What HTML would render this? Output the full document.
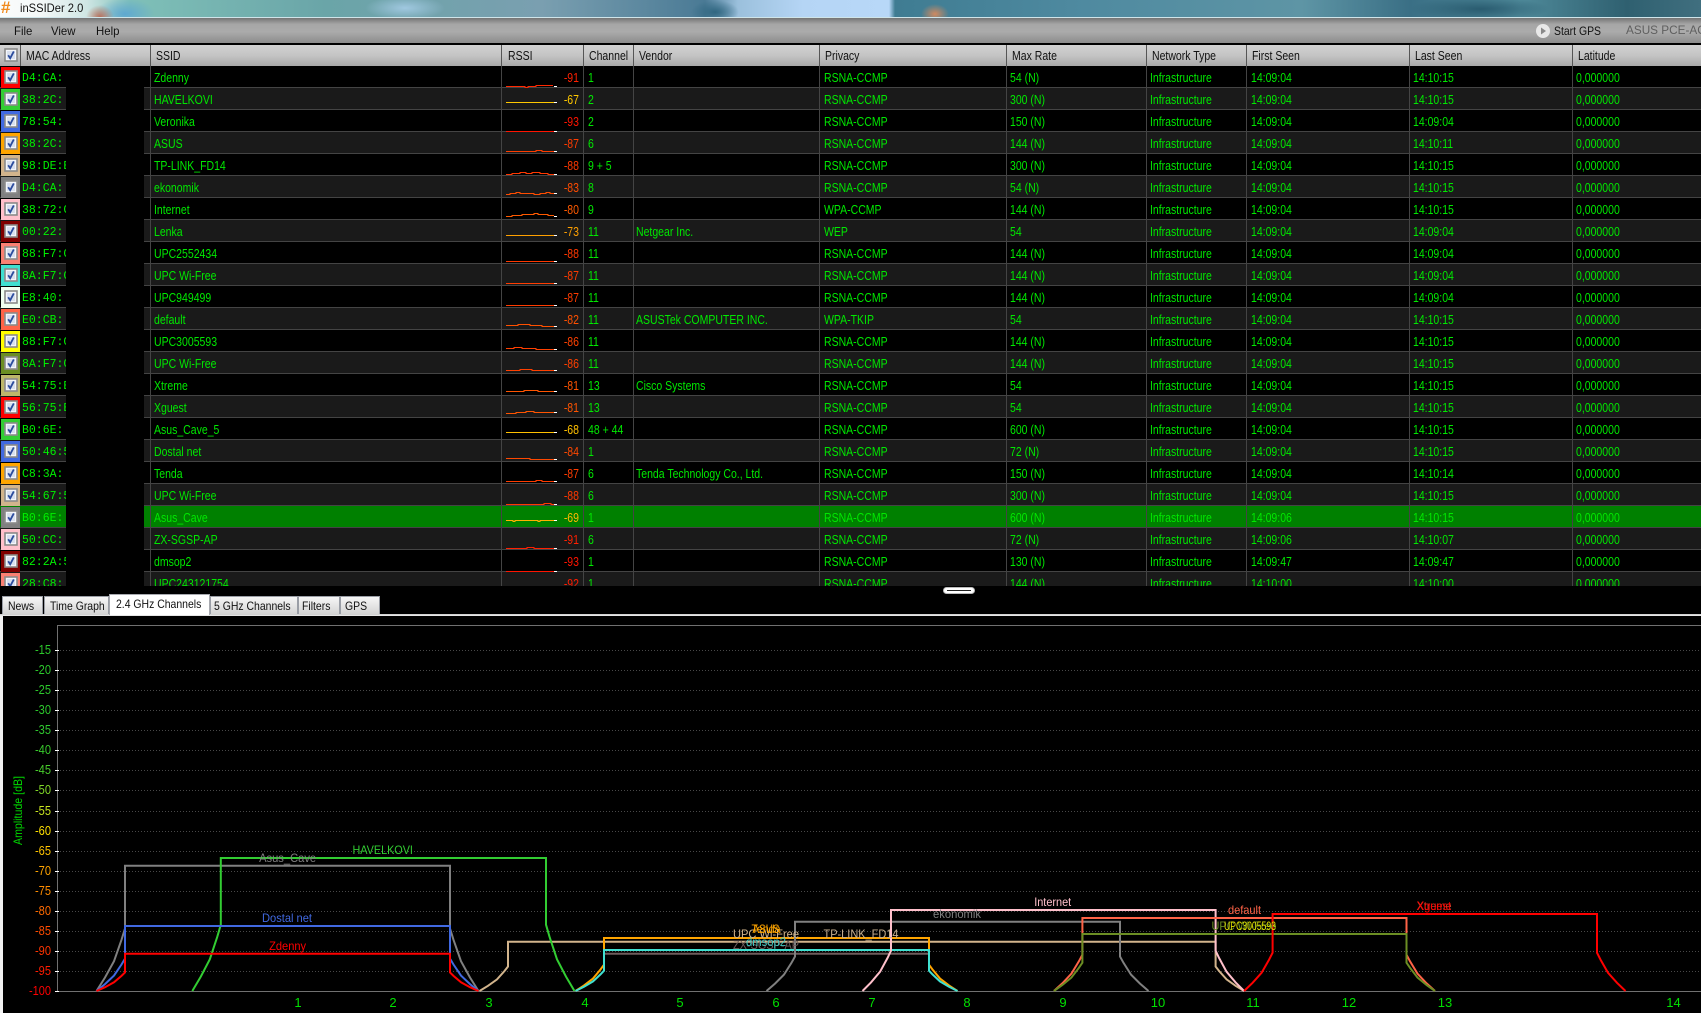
<!DOCTYPE html>
<html><head><meta charset="utf-8"><title>inSSIDer 2.0</title>
<style>
html,body{margin:0;padding:0;background:#000;width:1701px;height:1013px;overflow:hidden}
body{position:relative;font:12px/22px "Liberation Sans",sans-serif;color:#00e800}
.abs{position:absolute}
#title{left:0;top:0;width:1701px;height:18px;background:radial-gradient(ellipse 14px 12px at 100px 17px,#b8705c,transparent),radial-gradient(ellipse 30px 16px at 125px 14px,#5fa8d0,transparent),radial-gradient(ellipse 40px 12px at 405px 8px,#a0c8e0,transparent),radial-gradient(ellipse 24px 12px at 715px 12px,#2f6680,transparent),radial-gradient(ellipse 14px 10px at 935px 14px,#d08a60,transparent),radial-gradient(ellipse 70px 12px at 1480px 9px,#2a5c70,transparent),linear-gradient(90deg,#fafcfc 0,#f4f8f8 40px,#cfe6e4 87px,#7fc0b8 130px,#6aa5a8 325px,#7a9fb0 542px,#4a7a95 705px,#9bc0dc 738px,#b5d5f5 803px,#b8d8f8 889px,#3f7c92 895px,#4f8aa0 1085px,#5e95a5 1302px,#3a6f85 1410px,#4f8a9a 1519px,#2f6070 1627px,#406f7f 1701px)}
#tl{left:0;top:17px;width:1701px;height:1px;background:#cfe5ea}
#menu{left:0;top:18px;width:1701px;height:25px;background:linear-gradient(#747474,#a6a6a6 25%,#ababab 55%,#8c8c8c)}
.t{position:absolute;white-space:nowrap;transform:scaleX(.87);transform-origin:0 50%}
.k{color:#111}
#hdr{left:0;top:45px;width:1701px;height:21px;background:linear-gradient(#d2d2d2,#c4c4c4 50%,#a8a8a8);color:#111}
#hdr .t{top:1px;line-height:21px;font-size:12.5px;transform:scaleX(.84)}
#hdr u{position:absolute;top:0;width:1px;height:21px;background:#555}
#list{left:0;top:66px;width:1701px;height:520px;overflow:hidden}
.r{position:absolute;left:0;width:1701px;height:21px;border-bottom:1px solid #444;background:#000}
.e{background:#1a1a1a}
.s{background:#008000}
.r s{position:absolute;left:1px;top:1px;width:19px;height:21px}
.r i{position:absolute;top:1px;font-style:normal;font-size:12.5px;white-space:nowrap;transform:scaleX(.84);transform-origin:0 50%}
.r i:nth-of-type(1){left:22px;top:2px;width:44px;overflow:hidden;transform:none;font:11.5px/22px "Liberation Mono",monospace;color:#00f000}
.r i:nth-of-type(2){left:153.5px}
.r i:nth-of-type(3){left:539px;width:40px;text-align:right;transform-origin:100% 50%}
.r i:nth-of-type(4){left:588px}
.r i:nth-of-type(5){left:636px}
.r i:nth-of-type(6){left:823.5px}
.r i:nth-of-type(7){left:1010px}
.r i:nth-of-type(8){left:1150px}
.r i:nth-of-type(9){left:1250.5px}
.r i:nth-of-type(10){left:1413px}
.r i:nth-of-type(11){left:1575.5px}
#red{left:66px;top:0;width:77.5px;height:520px;background:#000}
.v{position:absolute;top:0;width:1px;height:520px;background:#444}
.tab{position:absolute;top:596px;height:17px;border:1px solid #9a9ea6;border-bottom:0;background:linear-gradient(#f6f6f6,#d4d4d4);box-sizing:content-box}
.tab.a{top:594px;height:20px;background:#fff;border:1px solid #a8aab0;border-bottom:0}
</style></head><body>
<div class="abs" id="title"></div><div class="abs" id="tl"></div>
<div class="abs" style="left:1px;top:-2px;font:bold 17px/20px 'Liberation Sans',sans-serif;color:#f08a1e">#</div>
<div class="t k" style="left:20px;top:-3px;transform:scaleX(.93)">inSSIDer 2.0</div>
<div class="abs" id="menu"></div>
<div class="t k" style="left:14px;top:20px;transform:scaleX(.95)">File</div>
<div class="t k" style="left:51px;top:20px;transform:scaleX(.95)">View</div>
<div class="t k" style="left:95.5px;top:20px;transform:scaleX(.95)">Help</div>
<svg class="abs" style="left:1535px;top:23px" width="16" height="16"><circle cx="8" cy="8" r="7" fill="#e8e8e8"/><path d="M6 4.5L11 8L6 11.5Z" fill="#8a8a8a"/></svg>
<div class="t k" style="left:1553.5px;top:20px">Start GPS</div>
<div class="t" style="left:1625.5px;top:19px;color:#5f5f5f;transform:scaleX(.98)">ASUS PCE-AC68</div>

<div class="abs" id="hdr">
<s style="position:absolute;left:0;top:0;width:20px;height:21px"></s>
<span class="t" style="left:26px">MAC Address</span><span class="t" style="left:156px">SSID</span><span class="t" style="left:507.5px">RSSI</span><span class="t" style="left:588.5px">Channel</span><span class="t" style="left:639px">Vendor</span><span class="t" style="left:824.5px">Privacy</span><span class="t" style="left:1012px">Max Rate</span><span class="t" style="left:1152px">Network Type</span><span class="t" style="left:1252px">First Seen</span><span class="t" style="left:1414.5px">Last Seen</span><span class="t" style="left:1577.5px">Latitude</span>
<u style="left:20px"></u><u style="left:150px"></u><u style="left:501px"></u><u style="left:583px"></u><u style="left:633px"></u><u style="left:819px"></u><u style="left:1006px"></u><u style="left:1146px"></u><u style="left:1246px"></u><u style="left:1409px"></u><u style="left:1572px"></u>
</div>
<svg class="abs" style="left:4px;top:48px" width="14" height="14"><use href="#cb"/></svg>

<div class="abs" id="list">
<div class="r" style="top:0"><s style="background:#f00"></s><i>D4:CA:</i><i>Zdenny</i><i style="color:#ff2000">-91</i><i>1</i><i></i><i>RSNA-CCMP</i><i>54 (N)</i><i>Infrastructure</i><i>14:09:04</i><i>14:10:15</i><i>0,000000</i></div>
<div class="r e" style="top:22px"><s style="background:#32cd32"></s><i>38:2C:</i><i>HAVELKOVI</i><i style="color:#ffc800">-67</i><i>2</i><i></i><i>RSNA-CCMP</i><i>300 (N)</i><i>Infrastructure</i><i>14:09:04</i><i>14:10:15</i><i>0,000000</i></div>
<div class="r" style="top:44px"><s style="background:#4169e1"></s><i>78:54:</i><i>Veronika</i><i style="color:#ff1400">-93</i><i>2</i><i></i><i>RSNA-CCMP</i><i>150 (N)</i><i>Infrastructure</i><i>14:09:04</i><i>14:09:04</i><i>0,000000</i></div>
<div class="r e" style="top:66px"><s style="background:#ffa500"></s><i>38:2C:</i><i>ASUS</i><i style="color:#ff3c00">-87</i><i>6</i><i></i><i>RSNA-CCMP</i><i>144 (N)</i><i>Infrastructure</i><i>14:09:04</i><i>14:10:11</i><i>0,000000</i></div>
<div class="r" style="top:88px"><s style="background:#d2b48c"></s><i>98:DE:E0</i><i>TP-LINK_FD14</i><i style="color:#ff3800">-88</i><i>9 + 5</i><i></i><i>RSNA-CCMP</i><i>300 (N)</i><i>Infrastructure</i><i>14:09:04</i><i>14:10:15</i><i>0,000000</i></div>
<div class="r e" style="top:110px"><s style="background:#808080"></s><i>D4:CA:</i><i>ekonomik</i><i style="color:#ff4c00">-83</i><i>8</i><i></i><i>RSNA-CCMP</i><i>54 (N)</i><i>Infrastructure</i><i>14:09:04</i><i>14:10:15</i><i>0,000000</i></div>
<div class="r" style="top:132px"><s style="background:#ffc0cb"></s><i>38:72:C0</i><i>Internet</i><i style="color:#ff5a00">-80</i><i>9</i><i></i><i>WPA-CCMP</i><i>144 (N)</i><i>Infrastructure</i><i>14:09:04</i><i>14:10:15</i><i>0,000000</i></div>
<div class="r e" style="top:154px"><s style="background:#800000"></s><i>00:22:</i><i>Lenka</i><i style="color:#ffa000">-73</i><i>11</i><i>Netgear Inc.</i><i>WEP</i><i>54</i><i>Infrastructure</i><i>14:09:04</i><i>14:09:04</i><i>0,000000</i></div>
<div class="r" style="top:176px"><s style="background:#fa8072"></s><i>88:F7:C0</i><i>UPC2552434</i><i style="color:#ff3800">-88</i><i>11</i><i></i><i>RSNA-CCMP</i><i>144 (N)</i><i>Infrastructure</i><i>14:09:04</i><i>14:09:04</i><i>0,000000</i></div>
<div class="r e" style="top:198px"><s style="background:#40e0d0"></s><i>8A:F7:C0</i><i>UPC Wi-Free</i><i style="color:#ff3c00">-87</i><i>11</i><i></i><i>RSNA-CCMP</i><i>144 (N)</i><i>Infrastructure</i><i>14:09:04</i><i>14:09:04</i><i>0,000000</i></div>
<div class="r" style="top:220px"><s style="background:#f0fff0"></s><i>E8:40:</i><i>UPC949499</i><i style="color:#ff3c00">-87</i><i>11</i><i></i><i>RSNA-CCMP</i><i>144 (N)</i><i>Infrastructure</i><i>14:09:04</i><i>14:09:04</i><i>0,000000</i></div>
<div class="r e" style="top:242px"><s style="background:#ff6347"></s><i>E0:CB:</i><i>default</i><i style="color:#ff5000">-82</i><i>11</i><i>ASUSTek COMPUTER INC.</i><i>WPA-TKIP</i><i>54</i><i>Infrastructure</i><i>14:09:04</i><i>14:10:15</i><i>0,000000</i></div>
<div class="r" style="top:264px"><s style="background:#ff0"></s><i>88:F7:C0</i><i>UPC3005593</i><i style="color:#ff4000">-86</i><i>11</i><i></i><i>RSNA-CCMP</i><i>144 (N)</i><i>Infrastructure</i><i>14:09:04</i><i>14:10:15</i><i>0,000000</i></div>
<div class="r e" style="top:286px"><s style="background:#6b8e23"></s><i>8A:F7:C0</i><i>UPC Wi-Free</i><i style="color:#ff4000">-86</i><i>11</i><i></i><i>RSNA-CCMP</i><i>144 (N)</i><i>Infrastructure</i><i>14:09:04</i><i>14:10:15</i><i>0,000000</i></div>
<div class="r" style="top:308px"><s style="background:#bdb76b"></s><i>54:75:E0</i><i>Xtreme</i><i style="color:#ff5400">-81</i><i>13</i><i>Cisco Systems</i><i>RSNA-CCMP</i><i>54</i><i>Infrastructure</i><i>14:09:04</i><i>14:10:15</i><i>0,000000</i></div>
<div class="r e" style="top:330px"><s style="background:#f00"></s><i>56:75:E0</i><i>Xguest</i><i style="color:#ff5400">-81</i><i>13</i><i></i><i>RSNA-CCMP</i><i>54</i><i>Infrastructure</i><i>14:09:04</i><i>14:10:15</i><i>0,000000</i></div>
<div class="r" style="top:352px"><s style="background:#32cd32"></s><i>B0:6E:</i><i>Asus_Cave_5</i><i style="color:#ffc000">-68</i><i>48 + 44</i><i></i><i>RSNA-CCMP</i><i>600 (N)</i><i>Infrastructure</i><i>14:09:04</i><i>14:10:15</i><i>0,000000</i></div>
<div class="r e" style="top:374px"><s style="background:#4169e1"></s><i>50:46:5D</i><i>Dostal net</i><i style="color:#ff4800">-84</i><i>1</i><i></i><i>RSNA-CCMP</i><i>72 (N)</i><i>Infrastructure</i><i>14:09:04</i><i>14:10:15</i><i>0,000000</i></div>
<div class="r" style="top:396px"><s style="background:#ffa500"></s><i>C8:3A:</i><i>Tenda</i><i style="color:#ff3c00">-87</i><i>6</i><i>Tenda Technology Co., Ltd.</i><i>RSNA-CCMP</i><i>150 (N)</i><i>Infrastructure</i><i>14:09:04</i><i>14:10:14</i><i>0,000000</i></div>
<div class="r e" style="top:418px"><s style="background:#d2b48c"></s><i>54:67:51</i><i>UPC Wi-Free</i><i style="color:#ff3800">-88</i><i>6</i><i></i><i>RSNA-CCMP</i><i>300 (N)</i><i>Infrastructure</i><i>14:09:04</i><i>14:10:15</i><i>0,000000</i></div>
<div class="r s" style="top:440px"><s style="background:#808080"></s><i>B0:6E:</i><i>Asus_Cave</i><i style="color:#ffb800">-69</i><i>1</i><i></i><i>RSNA-CCMP</i><i>600 (N)</i><i>Infrastructure</i><i>14:09:06</i><i>14:10:15</i><i>0,000000</i></div>
<div class="r e" style="top:462px"><s style="background:#ffc0cb"></s><i>50:CC:</i><i>ZX-SGSP-AP</i><i style="color:#ff2000">-91</i><i>6</i><i></i><i>RSNA-CCMP</i><i>72 (N)</i><i>Infrastructure</i><i>14:09:06</i><i>14:10:07</i><i>0,000000</i></div>
<div class="r" style="top:484px"><s style="background:#800000"></s><i>82:2A:5D</i><i>dmsop2</i><i style="color:#ff1400">-93</i><i>1</i><i></i><i>RSNA-CCMP</i><i>130 (N)</i><i>Infrastructure</i><i>14:09:47</i><i>14:09:47</i><i>0,000000</i></div>
<div class="r e" style="top:506px"><s style="background:#fa8072"></s><i>28:C8:</i><i>UPC243121754</i><i style="color:#ff1c00">-92</i><i>1</i><i></i><i>RSNA-CCMP</i><i>144 (N)</i><i>Infrastructure</i><i>14:10:00</i><i>14:10:00</i><i>0,000000</i></div>
<div class="abs" id="red"></div>
<div class="v" style="left:150px"></div><div class="v" style="left:501px"></div><div class="v" style="left:583px"></div><div class="v" style="left:633px"></div><div class="v" style="left:819px"></div><div class="v" style="left:1006px"></div><div class="v" style="left:1146px"></div><div class="v" style="left:1246px"></div><div class="v" style="left:1409px"></div><div class="v" style="left:1572px"></div>
<svg class="abs" style="left:0;top:0" width="600" height="520" fill="none" stroke-width="1">
<defs><symbol id="cb" viewBox="0 0 14 14" width="14" height="14"><rect x="1" y="1" width="12" height="12" fill="#f4f6fb" stroke="#8a8a8a" stroke-width="1.6"/><rect x="3" y="3" width="8" height="8" fill="#d9e0ee"/><path d="M4.2 7.2L6.2 10.2L9.8 3.4" fill="none" stroke="#2b4c9e" stroke-width="1.8"/></symbol></defs>
<use href="#cb" x="4" y="4"/><use href="#cb" x="4" y="26"/><use href="#cb" x="4" y="48"/><use href="#cb" x="4" y="70"/><use href="#cb" x="4" y="92"/><use href="#cb" x="4" y="114"/><use href="#cb" x="4" y="136"/><use href="#cb" x="4" y="158"/><use href="#cb" x="4" y="180"/><use href="#cb" x="4" y="202"/><use href="#cb" x="4" y="224"/><use href="#cb" x="4" y="246"/><use href="#cb" x="4" y="268"/><use href="#cb" x="4" y="290"/><use href="#cb" x="4" y="312"/><use href="#cb" x="4" y="334"/><use href="#cb" x="4" y="356"/><use href="#cb" x="4" y="378"/><use href="#cb" x="4" y="400"/><use href="#cb" x="4" y="422"/><use href="#cb" x="4" y="444"/><use href="#cb" x="4" y="466"/><use href="#cb" x="4" y="488"/><use href="#cb" x="4" y="510"/>
<g transform="translate(0,-66)">
<path stroke="#ff2800" d="M506 86.5H525V87.5H528V86.5H536V85.5H553"/>
<path stroke="#ffc800" d="M506 102.5H554"/>
<path stroke="#ff1400" d="M506 131.5H554"/>
<path stroke="#ff3c00" d="M506 151.5H536V150.5H542V151.5H554"/>
<path stroke="#ff3800" d="M506 174.5H512V173.5H520V172.5H526V173.5H532V172.5H540V173.5H548V174.5H554"/>
<path stroke="#ff4c00" d="M506 194.5H510V193.5H516V192.5H520V193.5H534V194.5H540V193.5H546V192.5H550V193.5H554"/>
<path stroke="#ff5a00" d="M506 216.5H512V215.5H522V214.5H534V213.5H538V214.5H548V215.5H554"/>
<path stroke="#ffa000" d="M506 235.5H554"/>
<path stroke="#ff3800" d="M506 261.5H554"/>
<path stroke="#ff3c00" d="M506 283.5H554"/>
<path stroke="#ff3c00" d="M506 305.5H554"/>
<path stroke="#ff5000" d="M506 325.5H518V324.5H530V325.5H542V326.5H554"/>
<path stroke="#ff4000" d="M506 348.5H514V347.5H522V348.5H536V349.5H554"/>
<path stroke="#ff4000" d="M506 370.5H520V369.5H532V370.5H554"/>
<path stroke="#ff5400" d="M506 391.5H524V390.5H538V391.5H554"/>
<path stroke="#ff5400" d="M506 413.5H516V412.5H526V411.5H534V412.5H554"/>
<path stroke="#ffc000" d="M506 432.5H554"/>
<path stroke="#ff4800" d="M506 458.5H530V459.5H554"/>
<path stroke="#ff3c00" d="M506 481.5H536V480.5H542V481.5H554"/>
<path stroke="#ff3800" d="M506 504.5H544V503.5H551V504.5H554"/>
<path stroke="#ffb000" d="M506 520.5H513V521.5H515V520.5H538V521.5H540V520.5H554"/>
<path stroke="#ff2000" d="M506 548.5H527V547.5H534V548.5H554"/>
<path stroke="#ff1400" d="M506 571.5H554"/>
<path stroke="#fff" d="M554 86.5h3M554 102.5h3M554 131.5h3M554 151.5h3M554 174.5h3M554 193.5h3M554 216.5h3M554 235.5h3M554 261.5h3M554 283.5h3M554 305.5h3M554 326.5h3M554 349.5h3M554 370.5h3M554 391.5h3M554 412.5h3M554 432.5h3M554 459.5h3M554 481.5h3M554 504.5h3M554 520.5h3M554 548.5h3M554 571.5h3"/>
</g>
</svg>
</div>

<svg class="abs" style="left:943px;top:587px" width="32" height="7"><rect x=".5" y=".5" width="31" height="6" rx="3" fill="#fff" stroke="#bbb"/><path d="M4 3.5H28" stroke="#222"/></svg>

<div class="tab" style="left:1.5px;width:39.5px"></div><div class="t k" style="left:7.5px;top:595px">News</div>
<div class="tab" style="left:43.5px;width:63.5px"></div><div class="t k" style="left:49.5px;top:595px">Time Graph</div>
<div class="tab" style="left:210px;width:85.5px"></div><div class="t k" style="left:214px;top:595px">5 GHz Channels</div>
<div class="tab" style="left:297.5px;width:40px"></div><div class="t k" style="left:302px;top:595px">Filters</div>
<div class="tab" style="left:339.5px;width:38px"></div><div class="t k" style="left:345px;top:595px">GPS</div>
<div class="abs" style="left:0;top:614px;width:1701px;height:2px;background:linear-gradient(#c8c8c8,#f0f0f0)"></div>
<div class="tab a" style="left:108.5px;width:99.5px"></div><div class="t k" style="left:116px;top:593px">2.4 GHz Channels</div>
<div class="abs" style="left:0;top:616px;width:3px;height:397px;background:#f2f2f2"></div>

<svg class="abs" style="left:0;top:0" width="1701" height="1013" fill="none" font-family="'Liberation Sans',sans-serif" font-size="12">
<g stroke="#484848" stroke-dasharray="1 2"><path d="M60 650.5H1701M60 670.5H1701M60 690.5H1701M60 710.5H1701M60 730.5H1701M60 750.5H1701M60 770.5H1701M60 790.5H1701M60 811.5H1701M60 831.5H1701M60 851.5H1701M60 871.5H1701M60 891.5H1701M60 911.5H1701M60 931.5H1701M60 951.5H1701M60 971.5H1701"/></g>
<path d="M1701 625.5H57.5V991.5H1701" stroke="#707070"/>
<path stroke="#fff" d="M55 650.5h4M55 670.5h4M55 690.5h4M55 710.5h4M55 730.5h4M55 750.5h4M55 770.5h4M55 790.5h4M55 811.5h4M55 831.5h4M55 851.5h4M55 871.5h4M55 891.5h4M55 911.5h4M55 931.5h4M55 951.5h4M55 971.5h4M55 991.5h4"/>
<g stroke="none" text-anchor="end" font-size="12.5">
<text x="51" y="654" fill="#2cc82c" textLength="16" lengthAdjust="spacingAndGlyphs">-15</text>
<text x="51" y="674" fill="#2cc82c" textLength="16" lengthAdjust="spacingAndGlyphs">-20</text>
<text x="51" y="694" fill="#2cc82c" textLength="16" lengthAdjust="spacingAndGlyphs">-25</text>
<text x="51" y="714" fill="#2cc82c" textLength="16" lengthAdjust="spacingAndGlyphs">-30</text>
<text x="51" y="734" fill="#30c830" textLength="16" lengthAdjust="spacingAndGlyphs">-35</text>
<text x="51" y="754" fill="#38ca2c" textLength="16" lengthAdjust="spacingAndGlyphs">-40</text>
<text x="51" y="774" fill="#48cc2c" textLength="16" lengthAdjust="spacingAndGlyphs">-45</text>
<text x="51" y="794" fill="#80d828" textLength="16" lengthAdjust="spacingAndGlyphs">-50</text>
<text x="51" y="815" fill="#c8e420" textLength="16" lengthAdjust="spacingAndGlyphs">-55</text>
<text x="51" y="835" fill="#ffe000" textLength="16" lengthAdjust="spacingAndGlyphs">-60</text>
<text x="51" y="855" fill="#ffc400" textLength="16" lengthAdjust="spacingAndGlyphs">-65</text>
<text x="51" y="875" fill="#ffa400" textLength="16" lengthAdjust="spacingAndGlyphs">-70</text>
<text x="51" y="895" fill="#ff8c00" textLength="16" lengthAdjust="spacingAndGlyphs">-75</text>
<text x="51" y="915" fill="#ff6a00" textLength="16" lengthAdjust="spacingAndGlyphs">-80</text>
<text x="51" y="935" fill="#ff4c00" textLength="16" lengthAdjust="spacingAndGlyphs">-85</text>
<text x="51" y="955" fill="#ff3400" textLength="16" lengthAdjust="spacingAndGlyphs">-90</text>
<text x="51" y="975" fill="#ff1c00" textLength="16" lengthAdjust="spacingAndGlyphs">-95</text>
<text x="51" y="995" fill="#ff0000" textLength="22" lengthAdjust="spacingAndGlyphs">-100</text>
</g>
<text transform="translate(22,845) rotate(-90)" fill="#00d800" stroke="none" textLength="69" lengthAdjust="spacingAndGlyphs">Amplitude [dB]</text>
<g stroke="none" fill="#00e000" font-size="13" text-anchor="middle">
<text x="298" y="1007">1</text><text x="393" y="1007">2</text><text x="489" y="1007">3</text><text x="585" y="1007">4</text><text x="680" y="1007">5</text><text x="776" y="1007">6</text><text x="872" y="1007">7</text><text x="967" y="1007">8</text><text x="1063" y="1007">9</text><text x="1158" y="1007">10</text><text x="1253" y="1007">11</text><text x="1349" y="1007">12</text><text x="1445" y="1007">13</text><text x="1673.5" y="1007">14</text>
</g>
<g stroke-width="2">
<path stroke="#6e5c5c" d="M604 953.7H929"/>
<path stroke="#808080" d="M96.5 991L105 977.5L114 961.2L121.5 939.8L125 928.5V865.7H450V928.5L453.5 939.8L461 961.2L470 977.5L478.5 991"/>
<path stroke="#d2b48c" d="M479.5 991L488 985.8L497 979.4L504.5 971L508 966.5V941.7H1215.6V966.5L1219.1 971L1226.6 979.4L1235.6 985.8L1244.1 991"/>
<path stroke="#ffa500" d="M575.5 991L584 985.4L593 978.5L600.5 969.5L604 964.7V938H929V964.7L932.5 969.5L940 978.5L949 985.4L957.5 991"/>
<path stroke="#40e0d0" d="M575.5 991L584 986.8L593 981.4L600.5 974.4L604 970.7V950H929V970.7L932.5 974.4L940 981.4L949 986.8L957.5 991"/>
<path stroke="#808080" d="M766.5 991L775 983.6L784 974.6L791.5 962.8L795 956.5V921.7H1120V956.5L1123.5 962.8L1131 974.6L1140 983.6L1148.5 991"/>
<path stroke="#ffc0cb" d="M862.5 991L871 982.4L880 971.8L887.5 958L891 950.7V910H1215.6V950.7L1219.1 958L1226.6 971.8L1235.6 982.4L1244.1 991"/>
<path stroke="#ff6347" d="M1053.9 991L1062.4 983.3L1071.4 973.7L1078.9 961.3L1082.4 954.7V918H1406.5V954.7L1410 961.3L1417.5 973.7L1426.5 983.3L1435 991"/>
<path stroke="#6b8e23" d="M1053.9 991L1062.4 985L1071.4 977.6L1078.9 967.8L1082.4 962.7V934H1406.5V962.7L1410 967.8L1417.5 977.6L1426.5 985L1435 991"/>
<path stroke="#f00" d="M1244.1 991L1252.6 982.8L1261.6 972.8L1269.1 959.6L1272.6 952.7V914H1597V952.7L1600.5 959.6L1608 972.8L1617 982.8L1625.5 991"/>
<path stroke="#32cd32" d="M192.3 991L200.8 976.6L209.8 959.3L217.3 936.7L220.8 924.7V858H546V924.7L549.5 936.7L557 959.3L566 976.6L574.5 991"/>
<path stroke="#4169e1" d="M96.5 991L105 984.1L114 975.6L121.5 964.5L125 958.6V926H450V958.6L453.5 964.5L461 975.6L470 984.1L478.5 991"/>
<path stroke="#f00" d="M96.5 991L105 987.2L114 982.3L121.5 975.9L125 972.5V953.7H450V972.5L453.5 975.9L461 982.3L470 987.2L478.5 991"/>
</g>
<g stroke="none" text-anchor="middle">
<text x="382.7" y="854" fill="#32cd32" textLength="60.5" lengthAdjust="spacingAndGlyphs">HAVELKOVI</text>
<text x="287.6" y="862" fill="#808080" textLength="57" lengthAdjust="spacingAndGlyphs">Asus_Cave</text>
<text x="287" y="922" fill="#4169e1" textLength="50" lengthAdjust="spacingAndGlyphs">Dostal net</text>
<text x="287.6" y="950" fill="#f00" textLength="37" lengthAdjust="spacingAndGlyphs">Zdenny</text>
<text x="766" y="949" fill="#6e5c5c" textLength="66" lengthAdjust="spacingAndGlyphs">ZX-SGSP-AP</text>
<text x="766" y="938" fill="#d2b48c" textLength="66" lengthAdjust="spacingAndGlyphs">UPC Wi-Free</text>
<text x="766" y="933" fill="#ffa500" textLength="29" lengthAdjust="spacingAndGlyphs">Tenda</text>
<text x="766" y="933" fill="#ffa500" textLength="27" lengthAdjust="spacingAndGlyphs">ASUS</text>
<text x="766" y="946" fill="#40c8c0" textLength="40" lengthAdjust="spacingAndGlyphs">dmsop2</text>
<text x="861" y="938" fill="#c8b090" textLength="75" lengthAdjust="spacingAndGlyphs">TP-LINK_FD14</text>
<text x="957" y="918" fill="#808080" textLength="48" lengthAdjust="spacingAndGlyphs">ekonomik</text>
<text x="1052.7" y="906" fill="#ffc0cb" textLength="37" lengthAdjust="spacingAndGlyphs">Internet</text>
<text x="1244.5" y="914" fill="#ff6347" textLength="33" lengthAdjust="spacingAndGlyphs">default</text>
<text x="1244" y="930" fill="#6b8e23" textLength="65" lengthAdjust="spacingAndGlyphs">UPC Wi-Free</text>
<text x="1250" y="930" fill="#e0e000" textLength="52" lengthAdjust="spacingAndGlyphs">UPC3005593</text>
<text x="1434" y="910" fill="#c83c28" textLength="35" lengthAdjust="spacingAndGlyphs">Xtreme</text>
<text x="1434" y="910" fill="#f00" textLength="34" lengthAdjust="spacingAndGlyphs">Xguest</text>
</g>
</svg>
</body></html>
